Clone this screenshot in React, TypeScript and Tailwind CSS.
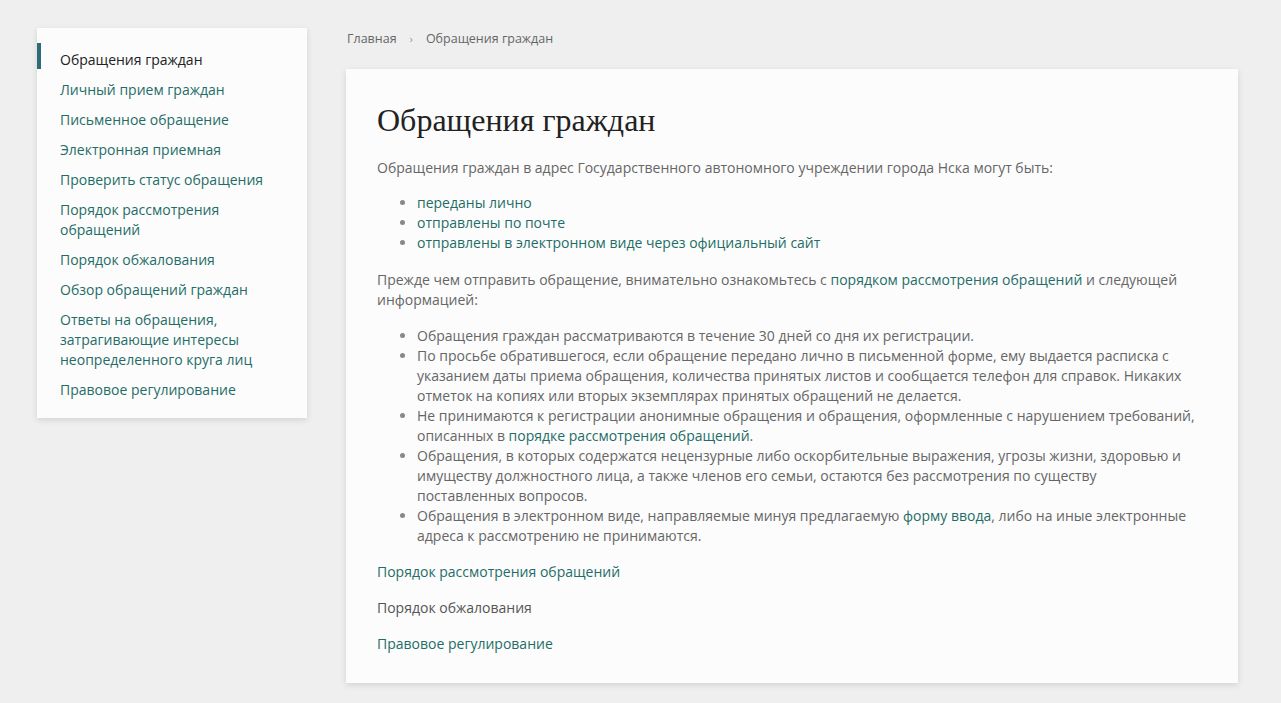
import React from "react";

const navItems = [
  "Обращения граждан",
  "Личный прием граждан",
  "Письменное обращение",
  "Электронная приемная",
  "Проверить статус обращения",
  "Порядок рассмотрения обращений",
  "Порядок обжалования",
  "Обзор обращений граждан",
  "Ответы на обращения, затрагивающие интересы неопределенного круга лиц",
  "Правовое регулирование",
];

const Link = ({ children }: { children: React.ReactNode }) => (
  <a href="#" className="text-[#1f6d67] no-underline">
    {children}
  </a>
);

export default function App() {
  return (
    <div
      className="min-h-[703px] bg-[#efefef] text-[14px] leading-5 text-[#666]"
      style={{ fontFamily: '"Open Sans", sans-serif' }}
    >
      <div className="flex gap-[39px] pl-[37px] pt-[28px] pb-[21px]">
        {/* Sidebar */}
        <aside className="w-[270px] shrink-0 self-start bg-[#fcfcfc] pt-[17px] pb-[13px] shadow-[0_2px_6px_rgba(0,0,0,0.12)]">
          <ul>
            {navItems.map((item, i) => (
              <li key={item} className="relative">
                {i === 0 && <span className="absolute left-0 top-[-2px] h-[26px] w-[4px] bg-[#2f6b77]" />}
                <a
                  href="#"
                  className={`block py-[5px] pl-[23px] pr-6 ${i === 0 ? "text-[#222]" : "text-[#1f6d67]"}`}
                >
                  {item}
                </a>
              </li>
            ))}
          </ul>
        </aside>

        {/* Main */}
        <main className="w-[892px]">
          <nav className="flex items-center gap-[13px] pl-px text-[12.5px] leading-[22px] text-[#666]">
            <span>Главная</span>
            <span className="text-[11px] text-[#999]">›</span>
            <span>Обращения граждан</span>
          </nav>
          <div className="mt-[19px] bg-[#fcfcfc] px-[31px] pt-[33px] pb-[29px] shadow-[0_2px_6px_rgba(0,0,0,0.12)]">
            <h1
              className="text-[32px] leading-9 text-[#222]"
              style={{ fontFamily: '"Liberation Serif", serif' }}
            >
              Обращения граждан
            </h1>
            <p className="mt-[20px]">
              Обращения граждан в адрес Государственного автономного учреждении города Нска могут быть:
            </p>
            <ul className="mt-[15px] list-disc pl-10 marker:text-[#888]">
              <li><Link>переданы лично</Link></li>
              <li><Link>отправлены по почте</Link></li>
              <li><Link>отправлены в электронном виде через официальный сайт</Link></li>
            </ul>
            <p className="mt-[17px]">
              Прежде чем отправить обращение, внимательно ознакомьтесь с <Link>порядком рассмотрения обращений</Link> и
              следующей информацией:
            </p>
            <ul className="mt-4 list-disc pl-10 pr-[10px] marker:text-[#888]">
              <li>Обращения граждан рассматриваются в течение 30 дней со дня их регистрации.</li>
              <li>
                По просьбе обратившегося, если обращение передано лично в письменной форме, ему выдается расписка с
                указанием даты приема обращения, количества принятых листов и сообщается телефон для справок. Никаких
                отметок на копиях или вторых экземплярах принятых обращений не делается.
              </li>
              <li>
                Не принимаются к регистрации анонимные обращения и обращения, оформленные с нарушением требований,
                описанных в <Link>порядке рассмотрения обращений</Link>.
              </li>
              <li>
                Обращения, в которых содержатся нецензурные либо оскорбительные выражения, угрозы жизни, здоровью и
                имуществу должностного лица, а также членов его семьи, остаются без рассмотрения по существу
                поставленных вопросов.
              </li>
              <li>
                Обращения в электронном виде, направляемые минуя предлагаемую <Link>форму ввода</Link>, либо на иные
                электронные адреса к рассмотрению не принимаются.
              </li>
            </ul>
            <div className="mt-4 flex flex-col gap-4">
              <Link>Порядок рассмотрения обращений</Link>
              <span className="text-[#555]">Порядок обжалования</span>
              <Link>Правовое регулирование</Link>
            </div>
          </div>
        </main>
      </div>
    </div>
  );
}
